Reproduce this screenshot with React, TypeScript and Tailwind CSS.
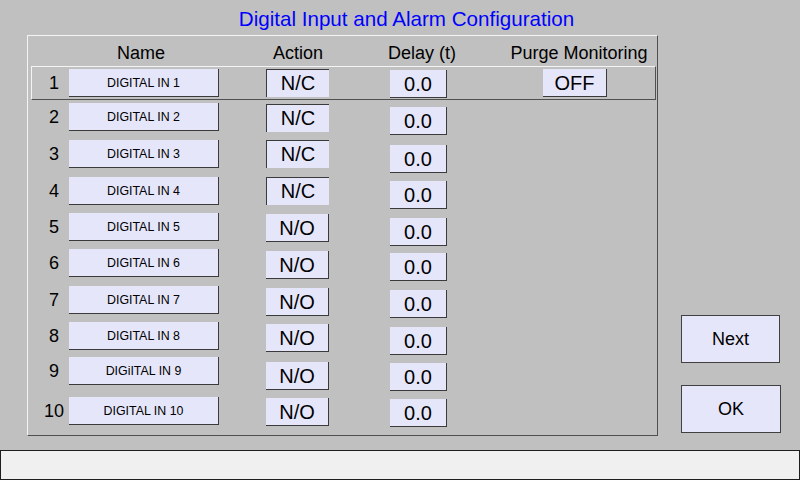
// Écran de configuration des entrées numériques
const font = "font-['Liberation_Sans',Arial,sans-serif]"

type Row = {
  n: number
  label: string
  action: 'N/C' | 'N/O'
  h: string
  actMt: string
  delMt: string
}

// Lignes 2 à 10 (la ligne 1 est encadrée à part)
const rows: Row[] = [
  { n: 2, label: 'DIGITAL IN 2', action: 'N/C', h: 'h-[37px]', actMt: 'mt-[1px]', delMt: 'mt-[4px]' },
  { n: 3, label: 'DIGITAL IN 3', action: 'N/C', h: 'h-[37px]', actMt: 'mt-0', delMt: 'mt-[5px]' },
  { n: 4, label: 'DIGITAL IN 4', action: 'N/C', h: 'h-[36px]', actMt: 'mt-0', delMt: 'mt-[4px]' },
  { n: 5, label: 'DIGITAL IN 5', action: 'N/O', h: 'h-[36px]', actMt: 'mt-[1px]', delMt: 'mt-[5px]' },
  { n: 6, label: 'DIGITAL IN 6', action: 'N/O', h: 'h-[37px]', actMt: 'mt-[2px]', delMt: 'mt-[4px]' },
  { n: 7, label: 'DIGITAL IN 7', action: 'N/O', h: 'h-[36px]', actMt: 'mt-[2px]', delMt: 'mt-[4px]' },
  { n: 8, label: 'DIGITAL IN 8', action: 'N/O', h: 'h-[35px]', actMt: 'mt-[2px]', delMt: 'mt-[5px]' },
  { n: 9, label: 'DIGiITAL IN 9', action: 'N/O', h: 'h-[40px]', actMt: 'mt-[5px]', delMt: 'mt-[6px]' },
  { n: 10, label: 'DIGITAL IN 10', action: 'N/O', h: 'h-[28px]', actMt: 'mt-[1px]', delMt: 'mt-[2px]' },
]

function NameButton({ label }: { label: string }) {
  return (
    <div className="flex h-[28px] w-[150px] items-center justify-center border-r border-b border-[#3a3a3a] bg-[#e6e6fa] pt-[2px] text-[12.4px] text-black">
      {label}
    </div>
  )
}

function ActionBox({ value, className }: { value: string; className: string }) {
  const inset = value === 'N/C'
  return (
    <div
      className={
        inset
          ? `ml-[47px] flex h-[28px] w-[63px] items-center justify-center border-t border-l border-[#3a3a3a] bg-[#e6e6fa] pb-[2px] text-[20px] ${className}`
          : `ml-[47px] flex h-[28px] w-[63px] items-center justify-center border-r border-b border-[#3a3a3a] bg-[#e6e6fa] text-[20px] ${className}`
      }
    >
      {value}
    </div>
  )
}

function DelayBox({ className }: { className: string }) {
  return (
    <div
      className={`ml-[61px] flex h-[28px] w-[57px] items-center justify-center border-r border-b border-[#3a3a3a] bg-[#e6e6fa] text-[20px] ${className}`}
    >
      0.0
    </div>
  )
}

export default function App() {
  return (
    <div className={`flex h-[480px] w-[800px] flex-col overflow-hidden bg-[#c0c0c0] text-black ${font}`}>
      {/* Titre */}
      <div className="flex h-[35px] items-center justify-center pt-[3px] pl-[13px] text-[20.6px] text-[#0000ff]">
        Digital Input and Alarm Configuration
      </div>

      <div className="flex h-[415px]">
        {/* Panneau principal */}
        <div className="ml-[27px] h-[401px] w-[631px] border-t border-l border-t-[#f4f4f4] border-l-[#f4f4f4] border-r border-b border-r-[#505050] border-b-[#505050]">
          <div className="flex h-[30px] items-center pt-[4px] text-[18px]">
            <div className="w-[226px] text-center">Name</div>
            <div className="w-[88px] text-center">Action</div>
            <div className="w-[160px] text-center">Delay (t)</div>
            <div className="w-[154px] text-center">Purge Monitoring</div>
          </div>

          {/* Ligne 1 */}
          <div className="ml-[3px] flex h-[34px] w-[625px] border-t border-l border-t-[#f4f4f4] border-l-[#f4f4f4] border-r border-b border-r-[#505050] border-b-[#505050] pt-[2px]">
            <div className="flex h-[28px] w-[37px] items-center justify-center pl-[7px] text-[18px]">1</div>
            <NameButton label="DIGITAL IN 1" />
            <ActionBox value="N/C" className="mt-0" />
            <DelayBox className="mt-[1px]" />
            <div className="ml-[96px] flex h-[28px] w-[64px] items-center justify-center border-r border-b border-[#3a3a3a] bg-[#e6e6fa] text-[20px]">
              OFF
            </div>
          </div>

          {/* Lignes 2 à 10 */}
          <div className="mt-[3px] flex flex-col">
            {rows.map((r) => (
              <div key={r.n} className={`flex ${r.h}`}>
                <div className="flex h-[28px] w-[41px] items-center justify-center pl-[11px] text-[18px]">{r.n}</div>
                <NameButton label={r.label} />
                <ActionBox value={r.action} className={r.actMt} />
                <DelayBox className={r.delMt} />
              </div>
            ))}
          </div>
        </div>

        {/* Boutons de navigation */}
        <div className="ml-[23px] flex flex-col pt-[280px]">
          <div className="flex h-[48px] w-[99px] items-center justify-center border border-[#404040] bg-[#e6e6fa] text-[18px]">
            Next
          </div>
          <div className="mt-[22px] flex h-[48px] w-[100px] items-center justify-center border border-[#404040] bg-[#e6e6fa] text-[18px]">
            OK
          </div>
        </div>
      </div>

      {/* Barre d'état */}
      <div className="h-[30px] w-[800px] border border-[#1e1e1e] bg-[#f0f0f0]" />
    </div>
  )
}
